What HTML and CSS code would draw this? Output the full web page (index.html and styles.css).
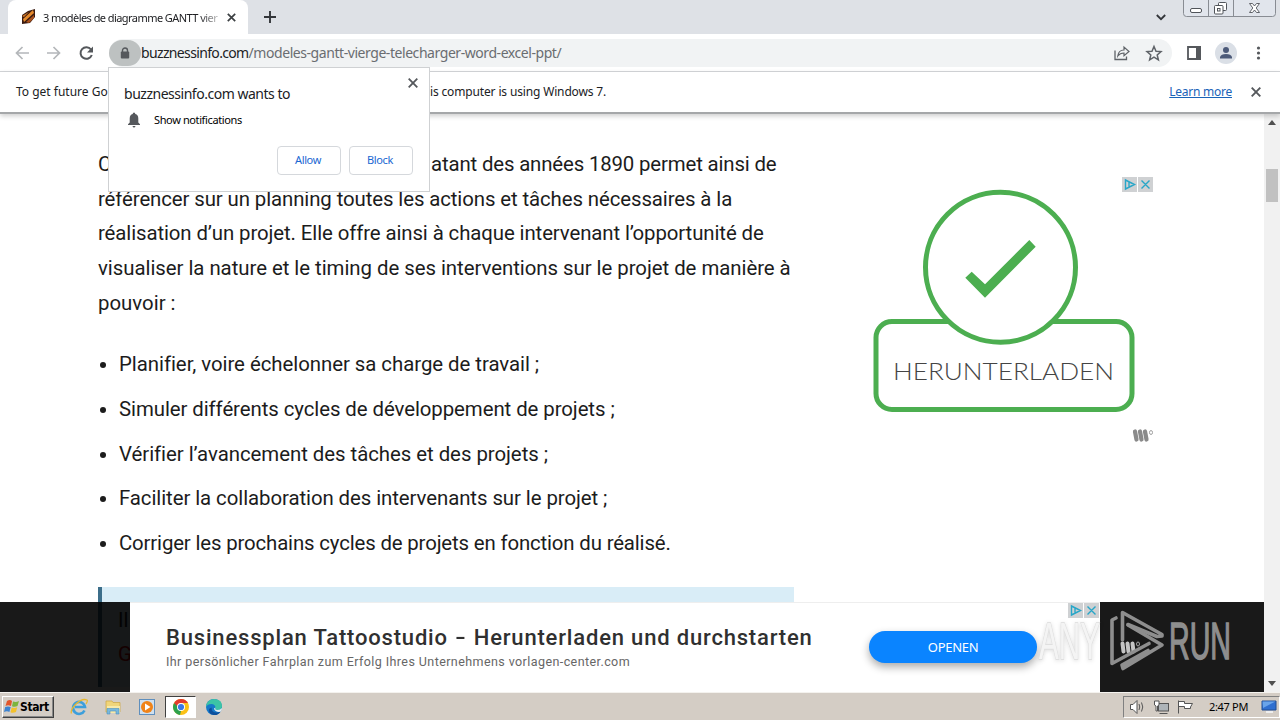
FILE: index.html
```html
<!DOCTYPE html>
<html lang="fr">
<head>
<meta charset="utf-8">
<title>3 modèles de diagramme GANTT vierge</title>
<link rel="stylesheet" href="styles.css">
</head>
<body>
<div class="screen">
  <header class="tabstrip">
    <div class="tab-prev"></div>
    <div class="tab">
      <svg class="favicon" width="15" height="16" viewBox="0 0 15 16"><path d="M1 6 7 2 14 0 14 8 9 14 1 15Z" fill="#3a1a10"/><path d="M2 10 12 1 13 4 3 13Z" fill="#e58a2c"/><path d="M5 13 13 6 13 9 8 14Z" fill="#a9521d"/><path d="M1 7 8 3 3 8Z" fill="#d27a2a"/></svg>
      <span class="tab-title">3 modèles de diagramme GANTT vier</span>
      <svg class="tab-close" width="9" height="9" viewBox="0 0 9 9"><path d="M.8.8l7.4 7.4M8.2.8.8 8.2" stroke="#3c4043" stroke-width="1.7"/></svg>
    </div>
    <svg class="new-tab" width="12" height="12" viewBox="0 0 12 12"><path d="M6 0v12M0 6h12" stroke="#33363a" stroke-width="1.9"/></svg>
    <svg class="tab-search" width="10" height="7" viewBox="0 0 10 7"><path d="M.8 1l4.2 4.2L9.200 1" fill="none" stroke="#33363a" stroke-width="1.8"/></svg>
    <svg class="win-controls" width="94" height="18" viewBox="0 0 94 18"><path d="M.5 0v13.500q0 3 3 3h86q3 0 3-3V0M25.500 0v16M50.500 0v16" fill="#e1e5ec" stroke="#888c93"/><rect x="7.500" y="8.500" width="11" height="4" rx="1.500" fill="#fff" stroke="#50545a"/><rect x="35.500" y="2.500" width="8" height="8" rx="1" fill="#fff" stroke="#50545a"/><rect x="31.500" y="5.500" width="8.500" height="8.500" rx="1" fill="#fff" stroke="#50545a"/><rect x="34.500" y="8.500" width="2.500" height="2.500" fill="none" stroke="#50545a"/><path d="M66.500 3.500h3l2 2.500 2-2.500h3l-3.300 4.500 3.300 4.500h-3l-2-2.500-2 2.500h-3l3.300-4.500Z" fill="#fff" stroke="#50545a" stroke-width=".9"/></svg>
  </header>

  <nav class="toolbar">
    <svg class="nav-icons" width="94" height="20" viewBox="0 0 94 20"><g fill="none" stroke-width="1.700"><path d="M14 10H1.500M7.500 4 1.500 10l6 6" stroke="#b4b7ba"/><path d="M32 10h12.500M38.500 4l6 6-6 6" stroke="#b4b7ba"/><path d="M76 6.500A5.800 5.800 0 1 0 76.800 12" stroke="#55585c" stroke-width="2"/></g><path d="M78 3.500v6h-6Z" fill="#55585c"/></svg>
    <div class="omnibox">
      <div class="lock"><svg width="10" height="12" viewBox="0 0 10 12"><path d="M2.500 5V3.500a2.500 2.500 0 0 1 5 0V5" fill="none" stroke="#55585c" stroke-width="1.400"/><rect x=".8" y="4.500" width="8.400" height="7" rx="1" fill="#55585c"/></svg></div>
      <span class="url"><b>buzznessinfo.com</b>/modeles-gantt-vierge-telecharger-word-excel-ppt/</span>
      <svg class="share" width="50" height="18" viewBox="0 0 50 18"><path d="M1 6.500v9h11.500v-3" fill="none" stroke="#5f6368" stroke-width="1.300"/><path d="M3.800 12Q4.500 6 10 6V3l5 4.500-5 4.300V9Q6 9 3.800 12Z" fill="none" stroke="#5f6368" stroke-width="1.200"/><path d="M40 2.500l2 4.700 5 .4-3.800 3.300 1.200 5L40 13.200l-4.400 2.700 1.200-5L33 7.600l5-.4Z" fill="none" stroke="#5f6368" stroke-width="1.500"/></svg>
    </div>
    <svg class="tool-icons" width="80" height="24" viewBox="0 0 80 24"><path d="M2 6h12v12H2Z" fill="none" stroke="#55585c" stroke-width="1.800"/><path d="M10 5h5v14h-5Z" fill="#55585c"/><circle cx="40" cy="12" r="11" fill="#dadfe6"/><circle cx="40" cy="9" r="3" fill="#4c5a79"/><path d="M34 17.500v-1.500q1-3 6-3t6 3v1.500Z" fill="#4c5a79"/><g fill="#55585c"><circle cx="72.500" cy="7" r="1.600"/><circle cx="72.500" cy="12" r="1.600"/><circle cx="72.500" cy="17" r="1.600"/></g></svg>
  </nav>

  <div class="infobar">
    <span class="info-start">To get future Go</span>
    <span class="info-end">is computer is using Windows 7.</span>
    <a class="learn">Learn more</a>
    <svg width="10" height="10" viewBox="0 0 10 10"><path d="M.7.7l8.600 8.600M9.300.7.7 9.300" stroke="#55585c" stroke-width="1.900"/></svg>
  </div>

  <main class="page">
    <article class="article">
      <p><span class="first-part">C</span><span class="tighter">atant des années 1890 permet ainsi de</span><br><span class="tight">référencer sur un planning toutes les actions et tâches nécessaires à la</span><br><span class="tight">réalisation d’un projet. Elle offre ainsi à chaque intervenant l’opportunité de</span><br><span class="snug">visualiser la nature et le timing de ses interventions sur le projet de manière à</span><br>pouvoir :</p>
      <ul>
        <li class="snug">Planifier, voire échelonner sa charge de travail ;</li>
        <li class="close">Simuler différents cycles de développement de projets ;</li>
        <li class="snug">Vérifier l’avancement des tâches et des projets ;</li>
        <li class="close">Faciliter la collaboration des intervenants sur le projet ;</li>
        <li class="tighter">Corriger les prochains cycles de projets en fonction du réalisé.</li>
      </ul>
      <div class="callout"><div>Il</div><div class="red">G</div></div>
    </article>
    <svg class="ad" width="310" height="280" viewBox="0 0 310 280">
      <g fill="none" stroke="#4cae50" stroke-width="5"><rect x="16" y="151.500" width="256" height="88" rx="16"/><circle cx="140.500" cy="97.300" r="75" fill="#fff"/></g>
      <path d="M105.300 107.700l6.400-6 13.300 12.600L169.300 70l6.400 6.700L125 127.700Z" fill="#4cae50"/>
      <text x="33" y="210" class="ad-text" textLength="221" lengthAdjust="spacingAndGlyphs">HERUNTERLADEN</text>
      <rect x="262" y="7" width="15" height="15" fill="#cfd1d3"/><rect x="278" y="7" width="15" height="15" fill="#cfd1d3"/>
      <path d="M265.500 10v9l9-4.500ZM269 12.500v4.500M281.500 10.500l8 8M289.500 10.500l-8 8" fill="none" stroke="#27a6c8" stroke-width="1.400"/>
      <path d="M275 261.500l1.500 8M280 261.500l1.500 8M285 261.500l1.500 8" stroke="#8a8a8a" stroke-width="4.200" stroke-linecap="round"/><ellipse cx="291" cy="262.500" rx="1.500" ry="2" fill="none" stroke="#8a8a8a" stroke-width=".8"/>
    </svg>
    <div class="scrollbar"><i class="up"></i><div class="thumb"></div><i class="down"></i></div>
    <div class="bottom-ad">
      <div class="banner">
        <div class="banner-copy"><div class="headline">Businessplan Tattoostudio <span class="dash">-</span> Herunterladen und durchstarten</div><div class="sub">Ihr persönlicher Fahrplan zum Erfolg Ihres Unternehmens vorlagen-center.com</div></div>
        <div class="cta">OPENEN</div>
      </div>
    </div>
    <svg class="watermark" width="234" height="90" viewBox="0 0 234 90">
      <rect x="38" y="1" width="15" height="15" fill="#cfd1d3"/><rect x="54" y="1" width="15" height="15" fill="#cfd1d3"/>
      <path d="M41.500 4v9l9-4.500ZM45 6.500v4.500M57.500 4.500l8 8M65.500 4.500l-8 8" fill="none" stroke="#27a6c8" stroke-width="1.400"/>
      <text x="9" y="57" class="any" textLength="61" lengthAdjust="spacingAndGlyphs">ANY</text>
      <path d="M92.500 41.500l1 8M97.500 41.500l1 8M102.500 41.500l1 8" stroke="#c4c4c4" stroke-width="4" stroke-linecap="round"/><ellipse cx="108" cy="42" rx="1.500" ry="2" fill="none" stroke="#c4c4c4" stroke-width=".8"/>
      <g fill="none" stroke="#8e8e8e" stroke-width="3.600" stroke-linejoin="round" stroke-linecap="round"><path d="M92.500 38V10.500L132 32.500V34L127 34.500 98 22.500"/><path d="M86 16 82 18V61.500L119 41.500"/><path d="M98 23 132 43 93 66.500 92 63 118 48.500"/></g>
      <text x="139" y="57" class="run" textLength="62" lengthAdjust="spacingAndGlyphs">RUN</text>
    </svg>
  </main>

  <footer class="taskbar">
    <div class="start"><svg width="16" height="15" viewBox="0 0 16 15"><path d="M3 2q3-2 5 0L7 7Q4 5.500 1.500 7Z" fill="#e2552a"/><path d="M9 2.500q3 1 6-.5L13.500 7Q11 8.500 8 7.300Z" fill="#7db43c"/><path d="M1.200 8Q4 6.800 6.700 8L5.400 13Q3 11.500 0 13Z" fill="#3d83d0"/><path d="M7.700 8.500q3 1 5.500-.3L12 13q-3 1.500-5.500.3Z" fill="#f3c12c"/></svg><span>Start</span></div>
    <div class="launch">
      <svg width="18" height="18" viewBox="0 0 18 18"><path d="M14.500 12.500A6 6 0 1 1 15 9H5" fill="none" stroke="#3d9fdb" stroke-width="2.600"/><path d="M1.500 15.500Q0 12 6 6t11-4q1 1-1 4" fill="none" stroke="#e8b82e" stroke-width="1.300"/></svg>
      <svg width="18" height="18" viewBox="0 0 18 18"><path d="M2 3h6l1 1.500h7V14H2Z" fill="#f0d57a" stroke="#cfa94a" stroke-width=".8"/><path d="M3 8h13v7H3Z" fill="#f8e9a8"/><path d="M3 16v-5.500h12V16h-3v-3H6v3Z" fill="#79b8dc" stroke="#4c92bf" stroke-width=".6"/></svg>
      <svg width="18" height="18" viewBox="0 0 18 18"><rect x="1.500" y="1.500" width="15" height="15" fill="#cfe0ef" stroke="#5f8fbd"/><circle cx="9" cy="9" r="6" fill="#f08318"/><path d="M7 5.500v7l5.500-3.500Z" fill="#fff"/></svg>
      <div class="active"><svg width="18" height="18" viewBox="0 0 18 18"><circle cx="9" cy="9" r="8" fill="#fbc116"/><path d="M2.100 5 9 9l1 0-2 8A8 8 0 0 1 2.100 5Z" fill="#2da14d"/><path d="M2.100 5A8 8 0 0 1 16 5H8L6 9Z" fill="#e33b2e"/><circle cx="9" cy="9" r="4" fill="#fff"/><circle cx="9" cy="9" r="3.100" fill="#3b78e7"/></svg></div>
      <svg width="18" height="18" viewBox="0 0 18 18"><circle cx="9" cy="9" r="8" fill="#1679c9"/><path d="M1 9Q2 1 9.500 1 17 1.500 17 8q0 4-4.500 4-3 0-2-2.500Q10 6 6.500 6 2.500 6 1 9Z" fill="#3cc4a6"/><path d="M6.500 9.500Q6.500 15 12.500 14.500l3-.8Q13 17.500 8.500 17 3 16 4 11Z" fill="#0d4f9c"/><path d="M10.500 9.500q-1 2.500 2 2.500 3 0 4.200-2l.2 1.500-1.500 2.300q-5.400.7-6.400-3.300Z" fill="#e6eef2"/></svg>
    </div>
    <div class="tray">
      <svg width="66" height="18" viewBox="0 0 66 18"><g fill="#fff" stroke="#555" stroke-width="1"><path d="M.5 6.500H3l4-4v13l-4-4H.5Z"/><path d="M9 6q1.500 3 0 6M11.500 4.500q2.500 4.500 0 9" fill="none"/><rect x="28.500" y="5.500" width="10" height="7.500" fill="#aeb4b8"/><path d="M24.500 3H29v4L27.500 8v5H26V8l-1.500-1ZM29.500 15.500h8"/><path d="M48.500 2.500v13M48.500 3.500h6v2h8l-2 3.500 0 1.500h-6v-2h-6Z"/></g></svg>
      <span class="clock">2:47 PM</span>
      <svg width="17" height="15" viewBox="0 0 17 15"><path d="M1 2h14v9H1Z" fill="#2f6fd0" stroke="#234f93"/><path d="M1.500 2.500h13L2 9Z" fill="#69a4ea"/><path d="M5 13h7" stroke="#eee" stroke-width="2"/></svg>
    </div>
  </footer>

  <div class="popup">
    <div class="popup-head"><span>buzznessinfo.com wants to</span><svg width="10" height="10" viewBox="0 0 10 10"><path d="M.7.7l8.600 8.600M9.300.7.7 9.300" stroke="#55585c" stroke-width="1.800"/></svg></div>
    <div class="perm"><svg width="14" height="16" viewBox="0 0 14 16"><path d="M7 .5q1.300 0 1.300 1.500 3 .8 3 4.500v4l1.700 1.700v.8H1v-.8l1.700-1.700v-4q0-3.700 3-4.500Q5.700.5 7 .5ZM5.500 14h3q-.3 1.500-1.500 1.500T5.500 14Z" fill="#55585c"/></svg><span>Show notifications</span></div>
    <div class="buttons"><button>Allow</button><button>Block</button></div>
  </div>
</div>
</body>
</html>
```
FILE: styles.css
```css
* { box-sizing: border-box; }
body { margin: 0; font-family: "Noto Sans", sans-serif; font-size: 12px; color: #202124; }
svg { display: block; flex: none; }
span { white-space: nowrap; }
.screen { position: relative; width: 1280px; height: 720px; overflow: hidden; display: flex; flex-direction: column; background: #fff; }

.tabstrip { height: 34px; flex: none; background: #dee1e6; display: flex; }
.tab-prev { width: 8px; }
.tab { width: 240px; height: 34px; background: #fff; border-radius: 8px 8px 0 0; display: flex; align-items: center; padding-left: 13px; }
.tab-title { width: 177px; margin-left: 7px; font-size: 11px; letter-spacing: -0.56px; -webkit-mask-image: linear-gradient(90deg, #000 88%, #0003); }
.tab-close { margin-left: 7px; }
.new-tab { margin: 11px 0 0 16px; }
.tab-search { margin: 14px 17px 0 auto; }
.win-controls { margin-right: 3px; }

.toolbar { height: 38px; flex: none; display: flex; align-items: center; padding-left: 15px; border-bottom: 1px solid #d5d7da; }
.omnibox { width: 1063px; height: 28px; background: #f1f3f4; border-radius: 14px; display: flex; align-items: center; }
.lock { width: 32px; height: 26px; border-radius: 13px; background: #bdc1c1; display: grid; place-items: center; }
.url { font-size: 14px; letter-spacing: -0.44px; color: #6a6d71; }
.url b { font-weight: 400; color: #202124; letter-spacing: -0.65px; }
.share { margin: 0 8px 0 auto; }
.tool-icons { margin-left: 14px; }

.infobar { height: 42px; flex: none; display: flex; align-items: center; padding: 0 19px 1px 16px; border-bottom: 2px solid #a5a7a9; box-shadow: 0 2px 5px #0003; position: relative; z-index: 1; background: #fff; }
.info-start { width: 414px; }
.info-end { letter-spacing: -0.15px; }
.learn { margin: 0 19px 0 auto; color: #1a63b8; text-decoration: underline; font-size: 12px; letter-spacing: -0.25px; }

.page { position: relative; flex: 1; min-height: 0; display: flex; align-items: flex-start; overflow: hidden; }
.article { width: 696px; margin: 33px 66px 0 98px; flex: none; font: 20.400px/34.700px Roboto, sans-serif; color: #1c1c1c; white-space: nowrap; }
.article p { margin: 0 0 26.600px; }
.first-part { display: inline-block; width: 333px; height: 34px; vertical-align: top; }
.tighter { letter-spacing: -0.155px; }
.tight { letter-spacing: -0.105px; }
.close { letter-spacing: -0.078px; }
.snug { letter-spacing: -0.045px; }
.article ul { margin: 0; padding: 0 0 0 21px; }
.article li { margin-bottom: 10px; }
.callout { margin-top: 26px; height: 100px; border-left: 4px solid #3c6e8a; background: #d9edf7; padding: 16px; }
.red { color: #c00; }
.ad { margin-top: 56px; }
.ad-text { font: 300 23px Lato, sans-serif; fill: #444; }
.scrollbar { width: 16px; height: 100%; margin-left: auto; background: #f1f1f1; display: flex; flex-direction: column; align-items: center; padding: 6px 0; }
.up { border: 4px solid transparent; border-top: 0; border-bottom: 5px solid #505050; }
.down { border: 4px solid transparent; border-bottom: 0; border-top: 5px solid #505050; margin-top: auto; }
.thumb { width: 12px; height: 33px; margin-top: 44px; background: #c1c1c1; }

.bottom-ad { position: absolute; left: 0; bottom: 0; width: 1264px; height: 90px; padding-left: 130px; background: #000000e6; }
.banner { width: 970px; height: 90px; background: #fff; border-top: 1px solid #eee; display: flex; align-items: center; padding: 0 63px 1px 36px; justify-content: space-between; }
.banner-copy { white-space: nowrap; }
.headline { font: 500 22px/28px Roboto, sans-serif; letter-spacing: 0.82px; color: #303030; padding-top: 1px; }
.dash { display: inline-block; transform: scaleX(1.4); margin: 0 2.500px; }
.sub { font: 12.500px/20px Roboto, sans-serif; letter-spacing: 0.42px; color: #666; }
.cta { width: 168px; height: 32px; border-radius: 16px; background: #0a84ff; color: #fff; display: grid; place-items: center; font-size: 13px; letter-spacing: -0.3px; box-shadow: 0 4px 8px #0005; }
.watermark { position: absolute; left: 1030px; bottom: 0; }
.any, .run { font: 400 52px "Liberation Sans", sans-serif; stroke-width: 1.5; }
.any { fill: #f4f4f4; stroke: #dcdcdc; paint-order: stroke; filter: drop-shadow(0 1px 2px #0002); }
.run { fill: #8e8e8e; stroke: #8e8e8e; }

.taskbar { height: 28px; flex: none; background: #d4cdc5; border-top: 1px solid #f4f2ee; display: flex; align-items: center; }
.start { width: 52px; height: 22px; margin-left: 2px; border: 1px solid; border-color: #fff #404040 #404040 #fff; box-shadow: inset -1px -1px #888; display: flex; align-items: center; gap: 0; padding-left: 1px; font: bold 12px "DejaVu Sans Condensed", "DejaVu Sans", sans-serif; letter-spacing: -0.4px; color: #000; }
.launch { display: flex; align-items: center; margin-left: 16px; gap: 16px; }
.active { width: 31px; height: 22px; background: #fff; border: 1px solid; border-color: #404040 #fff #fff #404040; display: grid; place-items: center; margin: 0 -7px; }
.tray { margin-left: auto; width: 157px; height: 22px; border: 1px solid; border-color: #808080 #fff #fff #808080; display: flex; align-items: center; padding: 0 1px 0 6px; color: #000; }
.clock { margin: 0 auto; font-size: 11px; letter-spacing: -0.3px; }

.popup { position: absolute; z-index: 2; left: 108px; top: 67px; width: 322px; height: 125px; border: 1px solid #cfd1d3; background: #fff; padding: 10px 16px 0 15px; }
.popup-head { display: flex; justify-content: space-between; font-size: 14px; line-height: 20px; letter-spacing: -0.48px; padding-top: 6px; }
.popup-head svg { margin: -6px -5px 0 0; }
.perm { display: flex; align-items: center; gap: 13px; font-size: 11px; line-height: 16px; letter-spacing: -0.38px; margin: 8px 0 18px 3px; color: #000; }
.buttons { display: flex; justify-content: flex-end; gap: 8px; }
.buttons button { width: 64px; height: 29px; border: 1px solid #d5d8dc; border-radius: 4px; background: #fff; color: #1967d2; font: 11px "Noto Sans", sans-serif; letter-spacing: -0.4px; padding: 0 2px 2px 0; }
```
